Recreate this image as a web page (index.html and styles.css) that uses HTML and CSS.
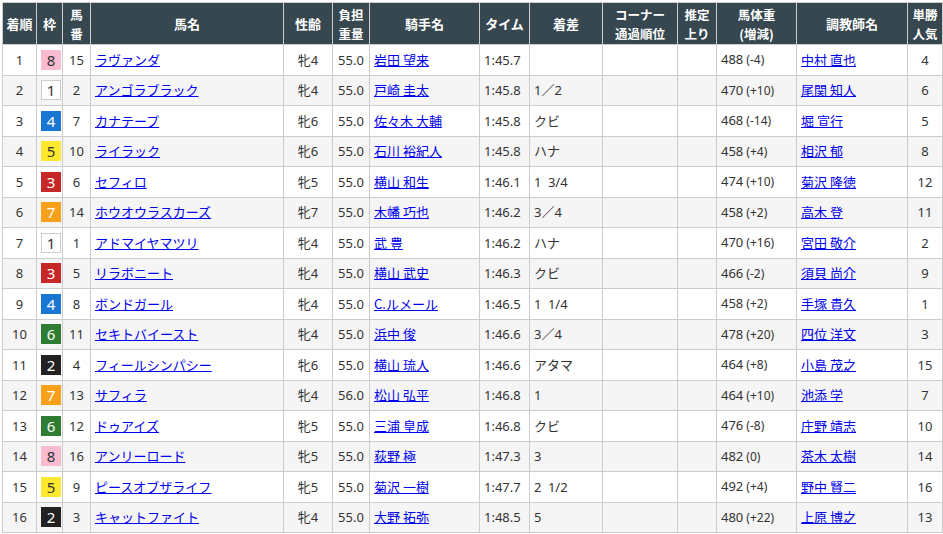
FILE: index.html
```html
<!DOCTYPE html>
<html lang="ja">
<head>
<meta charset="utf-8">
<title>レース結果</title>
<link rel="stylesheet" href="styles.css">
</head>
<body>
<table class="result">
<colgroup>
<col class="c-rank"><col class="c-waku"><col class="c-num"><col class="c-horse"><col class="c-sex"><col class="c-kg"><col class="c-jockey"><col class="c-time"><col class="c-margin"><col class="c-corner"><col class="c-last"><col class="c-weight"><col class="c-trainer"><col class="c-pop">
</colgroup>
<thead>
<tr>
<th>着順</th><th>枠</th><th><span class="ln">馬</span><span class="ln">番</span></th><th>馬名</th><th>性齢</th><th><span class="ln">負担</span><span class="ln">重量</span></th><th>騎手名</th><th>タイム</th><th>着差</th><th><span class="ln">コーナー</span><span class="ln">通過順位</span></th><th><span class="ln">推定</span><span class="ln">上り</span></th><th><span class="ln">馬体重</span><span class="ln">(増減)</span></th><th>調教師名</th><th><span class="ln">単勝</span><span class="ln">人気</span></th>
</tr>
</thead>
<tbody>
<tr><td class="ctr">1</td><td class="ctr"><span class="waku w8">8</span></td><td class="ctr">15</td><td class="lft"><a href="#">ラヴァンダ</a></td><td class="ctr">牝4</td><td class="ctr">55.0</td><td class="lft"><a href="#">岩田 望来</a></td><td class="lft">1:45.7</td><td class="mrg"></td><td></td><td></td><td class="lft">488<span class="diff">(-4)</span></td><td class="lft"><a href="#">中村 直也</a></td><td class="ctr">4</td></tr>
<tr><td class="ctr">2</td><td class="ctr"><span class="waku w1">1</span></td><td class="ctr">2</td><td class="lft"><a href="#">アンゴラブラック</a></td><td class="ctr">牝4</td><td class="ctr">55.0</td><td class="lft"><a href="#">戸崎 圭太</a></td><td class="lft">1:45.8</td><td class="mrg">1／2</td><td></td><td></td><td class="lft">470<span class="diff">(+10)</span></td><td class="lft"><a href="#">尾関 知人</a></td><td class="ctr">6</td></tr>
<tr><td class="ctr">3</td><td class="ctr"><span class="waku w4">4</span></td><td class="ctr">7</td><td class="lft"><a href="#">カナテープ</a></td><td class="ctr">牝6</td><td class="ctr">55.0</td><td class="lft"><a href="#">佐々木 大輔</a></td><td class="lft">1:45.8</td><td class="mrg">クビ</td><td></td><td></td><td class="lft">468<span class="diff">(-14)</span></td><td class="lft"><a href="#">堀 宣行</a></td><td class="ctr">5</td></tr>
<tr><td class="ctr">4</td><td class="ctr"><span class="waku w5">5</span></td><td class="ctr">10</td><td class="lft"><a href="#">ライラック</a></td><td class="ctr">牝6</td><td class="ctr">55.0</td><td class="lft"><a href="#">石川 裕紀人</a></td><td class="lft">1:45.8</td><td class="mrg">ハナ</td><td></td><td></td><td class="lft">458<span class="diff">(+4)</span></td><td class="lft"><a href="#">相沢 郁</a></td><td class="ctr">8</td></tr>
<tr><td class="ctr">5</td><td class="ctr"><span class="waku w3">3</span></td><td class="ctr">6</td><td class="lft"><a href="#">セフィロ</a></td><td class="ctr">牝5</td><td class="ctr">55.0</td><td class="lft"><a href="#">横山 和生</a></td><td class="lft">1:46.1</td><td class="mrg">1&ensp;3/4</td><td></td><td></td><td class="lft">474<span class="diff">(+10)</span></td><td class="lft"><a href="#">菊沢 隆徳</a></td><td class="ctr">12</td></tr>
<tr><td class="ctr">6</td><td class="ctr"><span class="waku w7">7</span></td><td class="ctr">14</td><td class="lft"><a href="#">ホウオウラスカーズ</a></td><td class="ctr">牝7</td><td class="ctr">55.0</td><td class="lft"><a href="#">木幡 巧也</a></td><td class="lft">1:46.2</td><td class="mrg">3／4</td><td></td><td></td><td class="lft">458<span class="diff">(+2)</span></td><td class="lft"><a href="#">高木 登</a></td><td class="ctr">11</td></tr>
<tr><td class="ctr">7</td><td class="ctr"><span class="waku w1">1</span></td><td class="ctr">1</td><td class="lft"><a href="#">アドマイヤマツリ</a></td><td class="ctr">牝4</td><td class="ctr">55.0</td><td class="lft"><a href="#">武 豊</a></td><td class="lft">1:46.2</td><td class="mrg">ハナ</td><td></td><td></td><td class="lft">470<span class="diff">(+16)</span></td><td class="lft"><a href="#">宮田 敬介</a></td><td class="ctr">2</td></tr>
<tr><td class="ctr">8</td><td class="ctr"><span class="waku w3">3</span></td><td class="ctr">5</td><td class="lft"><a href="#">リラボニート</a></td><td class="ctr">牝4</td><td class="ctr">55.0</td><td class="lft"><a href="#">横山 武史</a></td><td class="lft">1:46.3</td><td class="mrg">クビ</td><td></td><td></td><td class="lft">466<span class="diff">(-2)</span></td><td class="lft"><a href="#">須貝 尚介</a></td><td class="ctr">9</td></tr>
<tr><td class="ctr">9</td><td class="ctr"><span class="waku w4">4</span></td><td class="ctr">8</td><td class="lft"><a href="#">ボンドガール</a></td><td class="ctr">牝4</td><td class="ctr">55.0</td><td class="lft"><a href="#">C.ルメール</a></td><td class="lft">1:46.5</td><td class="mrg">1&ensp;1/4</td><td></td><td></td><td class="lft">458<span class="diff">(+2)</span></td><td class="lft"><a href="#">手塚 貴久</a></td><td class="ctr">1</td></tr>
<tr><td class="ctr">10</td><td class="ctr"><span class="waku w6">6</span></td><td class="ctr">11</td><td class="lft"><a href="#">セキトバイースト</a></td><td class="ctr">牝4</td><td class="ctr">55.0</td><td class="lft"><a href="#">浜中 俊</a></td><td class="lft">1:46.6</td><td class="mrg">3／4</td><td></td><td></td><td class="lft">478<span class="diff">(+20)</span></td><td class="lft"><a href="#">四位 洋文</a></td><td class="ctr">3</td></tr>
<tr><td class="ctr">11</td><td class="ctr"><span class="waku w2">2</span></td><td class="ctr">4</td><td class="lft"><a href="#">フィールシンパシー</a></td><td class="ctr">牝6</td><td class="ctr">55.0</td><td class="lft"><a href="#">横山 琉人</a></td><td class="lft">1:46.6</td><td class="mrg">アタマ</td><td></td><td></td><td class="lft">464<span class="diff">(+8)</span></td><td class="lft"><a href="#">小島 茂之</a></td><td class="ctr">15</td></tr>
<tr><td class="ctr">12</td><td class="ctr"><span class="waku w7">7</span></td><td class="ctr">13</td><td class="lft"><a href="#">サフィラ</a></td><td class="ctr">牝4</td><td class="ctr">56.0</td><td class="lft"><a href="#">松山 弘平</a></td><td class="lft">1:46.8</td><td class="mrg">1</td><td></td><td></td><td class="lft">464<span class="diff">(+10)</span></td><td class="lft"><a href="#">池添 学</a></td><td class="ctr">7</td></tr>
<tr><td class="ctr">13</td><td class="ctr"><span class="waku w6">6</span></td><td class="ctr">12</td><td class="lft"><a href="#">ドゥアイズ</a></td><td class="ctr">牝5</td><td class="ctr">55.0</td><td class="lft"><a href="#">三浦 皇成</a></td><td class="lft">1:46.8</td><td class="mrg">クビ</td><td></td><td></td><td class="lft">476<span class="diff">(-8)</span></td><td class="lft"><a href="#">庄野 靖志</a></td><td class="ctr">10</td></tr>
<tr><td class="ctr">14</td><td class="ctr"><span class="waku w8">8</span></td><td class="ctr">16</td><td class="lft"><a href="#">アンリーロード</a></td><td class="ctr">牝5</td><td class="ctr">55.0</td><td class="lft"><a href="#">荻野 極</a></td><td class="lft">1:47.3</td><td class="mrg">3</td><td></td><td></td><td class="lft">482<span class="diff">(0)</span></td><td class="lft"><a href="#">茶木 太樹</a></td><td class="ctr">14</td></tr>
<tr><td class="ctr">15</td><td class="ctr"><span class="waku w5">5</span></td><td class="ctr">9</td><td class="lft"><a href="#">ピースオブザライフ</a></td><td class="ctr">牝5</td><td class="ctr">55.0</td><td class="lft"><a href="#">菊沢 一樹</a></td><td class="lft">1:47.7</td><td class="mrg">2&ensp;1/2</td><td></td><td></td><td class="lft">492<span class="diff">(+4)</span></td><td class="lft"><a href="#">野中 賢二</a></td><td class="ctr">16</td></tr>
<tr><td class="ctr">16</td><td class="ctr"><span class="waku w2">2</span></td><td class="ctr">3</td><td class="lft"><a href="#">キャットファイト</a></td><td class="ctr">牝4</td><td class="ctr">55.0</td><td class="lft"><a href="#">大野 拓弥</a></td><td class="lft">1:48.5</td><td class="mrg">5</td><td></td><td></td><td class="lft">480<span class="diff">(+22)</span></td><td class="lft"><a href="#">上原 博之</a></td><td class="ctr">13</td></tr>
</tbody>
</table>
</body>
</html>
```
FILE: styles.css
```css
html, body {
  margin: 0;
  padding: 0;
  background: #fff;
}
body {
  padding: 2px;
  font-family: "Noto Sans", "Noto Sans CJK JP", sans-serif;
  font-size: 13px;
  color: #333;
}
.result {
  border-collapse: collapse;
  table-layout: fixed;
  width: 940px;
}
.c-rank { width: 34px; }
.c-waku { width: 26px; }
.c-num { width: 28px; }
.c-horse { width: 193px; }
.c-sex { width: 49px; }
.c-kg { width: 37px; }
.c-jockey { width: 110px; }
.c-time { width: 50px; }
.c-margin { width: 73px; }
.c-corner { width: 75px; }
.c-last { width: 39px; }
.c-weight { width: 80px; }
.c-trainer { width: 111px; }
.c-pop { width: 35px; }

.result th,
.result td {
  border: 1px solid #ccc;
  padding: 0 4px;
  white-space: nowrap;
  overflow: hidden;
}
.result th {
  background: #37474f;
  color: #fff;
  font-family: "Noto Sans CJK JP", sans-serif;
  font-weight: bold;
  font-size: 13px;
  line-height: 19px;
  height: 41px;
  text-align: center;
  padding: 0 2px;
}
.ln {
  display: block;
  height: 19px;
  line-height: 19px;
  font-size: 12.5px;
}
.result td {
  height: 29.5px;
  line-height: 16px;
}
.result tbody tr:nth-child(even) td {
  background: #f5f5f5;
}
.ctr { text-align: center; }
.lft { text-align: left; }
.mrg { padding-left: 8px; }
.result a {
  color: #0000ee;
  text-decoration: underline;
  font-family: "Noto Sans CJK JP", sans-serif;
}
.diff {
  margin-left: 3px;
  font-size: 12px;
}
.waku {
  display: inline-block;
  width: 20px;
  height: 20px;
  line-height: 20px;
  font-size: 15px;
  text-align: center;
  vertical-align: middle;
  box-sizing: border-box;
}
.w1 { background: #fff; border: 1px solid #ccc; color: #333; line-height: 18px; }
.w2 { background: #222; color: #fff; }
.w3 { background: #c62828; color: #fff; }
.w4 { background: #1976d2; color: #fff; }
.w5 { background: #fde72f; color: #333; }
.w6 { background: #2e7d32; color: #fff; }
.w7 { background: #f7a11a; color: #fff; }
.w8 { background: #f8bbd0; color: #333; }
```
